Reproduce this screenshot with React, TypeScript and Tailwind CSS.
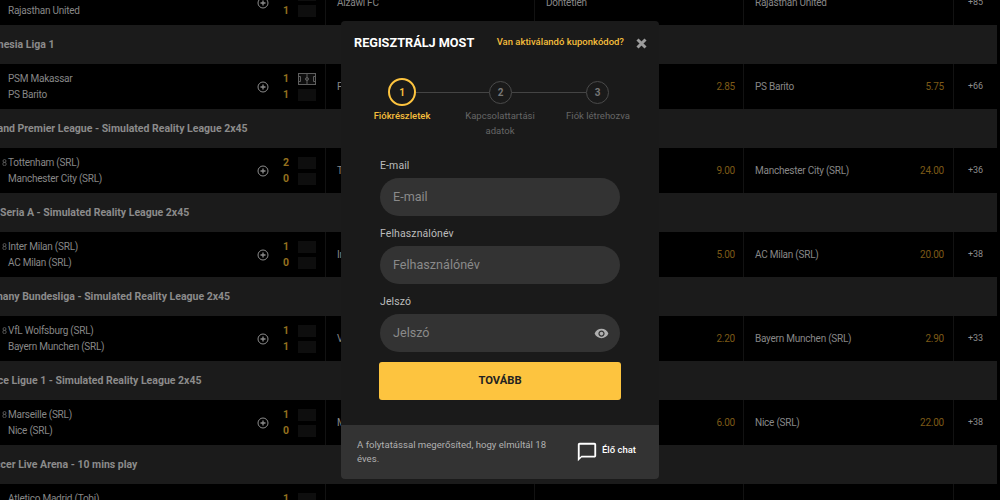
import React from "react";
import { MdVisibility, MdChatBubbleOutline } from "react-icons/md";

const font = { fontFamily: "Roboto, 'Liberation Sans', sans-serif" };

function PlusCircle() {
  return (
    <svg width="12" height="12" viewBox="0 0 12 12" fill="none" stroke="#8d8d8d" strokeWidth="1" className="block">
      <circle cx="6" cy="6" r="5" />
      <path d="M3.5 6h5M6 3.5v5" strokeWidth="1.3" />
    </svg>
  );
}

function Pitch() {
  return (
    <svg width="18" height="12" viewBox="0 0 18 12" fill="none" stroke="#5e5e5e" strokeWidth="1" className="block">
      <rect x="0.5" y="0.5" width="17" height="11" />
      <path d="M9 0.5v11M0.5 3.5h2v5h-2M17.5 3.5h-2v5h2" />
      <circle cx="9" cy="6" r="1.5" />
    </svg>
  );
}

function SrlMark() {
  return (
    <svg width="5" height="7" viewBox="0 0 5 7" fill="none" stroke="#666" strokeWidth="0.8" className="block">
      <circle cx="2.5" cy="2" r="1.5" />
      <circle cx="2.5" cy="5" r="1.7" />
    </svg>
  );
}

type Row = {
  home: string;
  away: string;
  s1: string;
  s2: string;
  d?: string;
  a?: string;
  h?: string;
  more: string;
  srl?: boolean;
  pitch?: boolean;
};

function Band({ title }: { title: string }) {
  return (
    <div className="h-[39px] mr-[3px] pt-[2px] bg-[#1b1b1b] flex items-center">
      <span className="-ml-[23px] text-[10.5px] font-bold text-[#8b8b8b] whitespace-nowrap leading-none">{title}</span>
    </div>
  );
}

function Match({ r }: { r: Row }) {
  return (
    <div className="h-[45px] mr-[3px] flex text-[10px] tracking-[-0.24px] text-[#878787] bg-black">
      <div className="w-[326px] shrink-0 flex items-center border-r border-[#121212]">
        <div className="w-[257px] shrink-0 pl-[2px] flex flex-col gap-[4px] leading-[12px]">
          <div className="flex items-center h-[12px]">
            <div className="w-[6px] shrink-0">{r.srl && <SrlMark />}</div>
            <span>{r.home}</span>
          </div>
          <div className="flex items-center h-[12px] pl-[6px]">
            <span>{r.away}</span>
          </div>
        </div>
        <div className="w-[12px] shrink-0"><PlusCircle /></div>
        <div className="w-[18px] shrink-0 ml-[8px] flex flex-col gap-[4px] text-[10.5px] font-bold text-[#94701f] leading-[12px] text-center">
          <span>{r.s1}</span>
          <span>{r.s2}</span>
        </div>
        <div className="ml-[3px] mt-[1px] flex flex-col gap-[4px]">
          <div className="w-[18px] h-[12px] bg-[#0e0e0e]">{r.pitch && <Pitch />}</div>
          <div className="w-[18px] h-[12px] bg-[#0e0e0e]" />
        </div>
      </div>
      <div className="w-[209px] shrink-0 flex items-center justify-between pl-[11px] pr-[9px] border-r border-[#121212]">
        <span>{r.home}</span>
        <span className="text-[10px] text-[#7d5a17]">{r.h}</span>
      </div>
      <div className="w-[209px] shrink-0 flex items-center justify-between pl-[11px] pr-[8px] border-r border-[#121212]">
        <span>Döntetlen</span>
        <span className="text-[10px] text-[#7d5a17]">{r.d}</span>
      </div>
      <div className="w-[210px] shrink-0 flex items-center justify-between pl-[11px] pr-[9px] border-r border-[#121212]">
        <span>{r.away}</span>
        <span className="text-[10px] text-[#7d5a17]">{r.a}</span>
      </div>
      <div className="flex-1 flex items-center justify-center text-[9px] tracking-normal text-[#8d8d8d]">{r.more}</div>
    </div>
  );
}

const sections: { title: string; r: Row }[] = [
  { title: "Indonesia Liga 1", r: { home: "PSM Makassar", away: "PS Barito", s1: "1", s2: "1", h: "1.60", d: "2.85", a: "5.75", more: "+66", pitch: true } },
  { title: "England Premier League - Simulated Reality League 2x45", r: { home: "Tottenham (SRL)", away: "Manchester City (SRL)", s1: "2", s2: "0", h: "1.10", d: "9.00", a: "24.00", more: "+36", srl: true } },
  { title: "Italy Seria A - Simulated Reality League 2x45", r: { home: "Inter Milan (SRL)", away: "AC Milan (SRL)", s1: "1", s2: "0", h: "1.50", d: "5.00", a: "20.00", more: "+38", srl: true } },
  { title: "Germany Bundesliga - Simulated Reality League 2x45", r: { home: "VfL Wolfsburg (SRL)", away: "Bayern Munchen (SRL)", s1: "1", s2: "1", h: "3.50", d: "2.20", a: "2.90", more: "+33", srl: true } },
  { title: "France Ligue 1 - Simulated Reality League 2x45", r: { home: "Marseille (SRL)", away: "Nice (SRL)", s1: "1", s2: "0", h: "1.12", d: "6.00", a: "22.00", more: "+38", srl: true } },
];

function Field({ label, placeholder, type = "text", eye }: { label: string; placeholder: string; type?: string; eye?: boolean }) {
  return (
    <div className="flex flex-col">
      <label className="text-[10.5px] tracking-[0.1px] leading-[12px] text-[#bcbcbc] mb-[6px]">{label}</label>
      <div className="relative">
        <input
          type={type}
          placeholder={placeholder}
          className="w-full h-[38px] rounded-[19px] bg-[#333333] pl-[13px] pr-[40px] pb-[2px] text-[12.6px] outline-none placeholder:text-[#8a8a8a]"
        />
        {eye && <MdVisibility className="absolute right-[11px] top-[12px] text-[#b0b0b0]" size={15} />}
      </div>
    </div>
  );
}

function Step({ n, active }: { n: string; active?: boolean }) {
  return (
    <div
      className={
        active
          ? "w-[28px] h-[28px] shrink-0 rounded-full border-2 border-[#fdc43f] flex items-center justify-center text-[10px] font-bold text-[#f5be3c]"
          : "w-[23px] h-[23px] shrink-0 rounded-full border border-[#4a4a4a] flex items-center justify-center text-[10px] font-bold text-[#777]"
      }
    >
      {n}
    </div>
  );
}

export default function App() {
  return (
    <div style={font} className="relative w-[1000px] h-[500px] overflow-hidden bg-black">
      <div className="-mt-[20px]">
        <Match r={{ home: "Aizawl FC", away: "Rajasthan United", s1: "1", s2: "1", more: "+85" }} />
        {sections.map((s) => (
          <React.Fragment key={s.title}>
            <Band title={s.title} />
            <Match r={s.r} />
          </React.Fragment>
        ))}
        <Band title="eSoccer Live Arena - 10 mins play" />
        <Match r={{ home: "Atletico Madrid (Tobi)", away: "Chelsea (Hans)", s1: "1", s2: "0", h: "1.50", d: "4.00", a: "6.00", more: "+20" }} />
      </div>

      <div className="absolute left-[341px] top-[21px] w-[318px] h-[458px] rounded-[4px] bg-[#1a1a1a] flex flex-col text-white">
        <div className="flex items-center h-[43px] pl-[13px] pr-[12px]">
          <h2 className="text-[12.7px] font-bold text-white whitespace-nowrap">REGISZTRÁLJ MOST</h2>
          <a className="ml-auto text-[9.5px] font-medium text-[#f5be3c] whitespace-nowrap">Van aktiválandó kuponkódod?</a>
          <svg width="11" height="11" viewBox="0 0 11 11" className="ml-[12px] mt-[1px] block" stroke="#9c9c9c" strokeWidth="3">
            <path d="M1.5 1.5l8 8M9.5 1.5l-8 8" />
          </svg>
        </div>

        <div className="flex items-center ml-[47px] mt-[14px]">
          <Step n="1" active />
          <div className="w-[73px] h-px bg-[#444]" />
          <Step n="2" />
          <div className="w-[74px] h-px bg-[#444]" />
          <Step n="3" />
        </div>
        <div className="grid grid-cols-3 w-[294px] ml-[12px] mt-[3px] text-center text-[9.5px] leading-[14.5px] text-[#666]">
          <span className="font-medium text-[#f5be3c]">Fiókrészletek</span>
          <span className="px-[10px]">Kapcsolattartási adatok</span>
          <span>Fiók létrehozva</span>
        </div>

        <div className="mx-[39px] mt-[22px] flex flex-col gap-[12px]">
          <Field label="E-mail" placeholder="E-mail" type="email" />
          <Field label="Felhasználónév" placeholder="Felhasználónév" />
          <Field label="Jelszó" placeholder="Jelszó" type="password" eye />
        </div>
        <button className="mx-[38px] mt-[10px] h-[38px] rounded-[3px] bg-[#fdc43f] text-[#222] text-[11.2px] font-bold">TOVÁBB</button>

        <div className="mt-auto h-[54px] bg-[#333333] rounded-b-[4px] flex items-center pl-[16px] pr-[23px]">
          <p className="w-[200px] text-[9.6px] leading-[14.5px] text-[#b0b0b0]">A folytatással megerősíted, hogy elmúltál 18 éves.</p>
          <MdChatBubbleOutline className="ml-auto text-white" size={22} />
          <span className="ml-[4px] mb-[3px] text-[9.5px] font-medium text-white whitespace-nowrap">Élő chat</span>
        </div>
      </div>
    </div>
  );
}
